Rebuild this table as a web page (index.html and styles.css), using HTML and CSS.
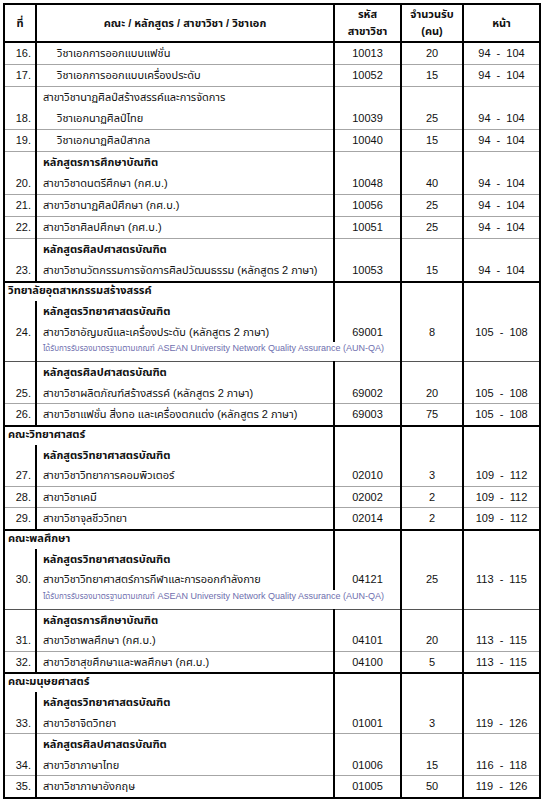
FILE: index.html
```html
<!DOCTYPE html>
<html lang="th">
<head>
<meta charset="utf-8">
<title>ตารางสาขาวิชา</title>
<link rel="stylesheet" href="styles.css">
</head>
<body>
<table class="tbl">
  <colgroup>
    <col class="c1"><col class="c2"><col class="c3"><col class="c4"><col class="c5">
  </colgroup>
  <thead>
    <tr>
      <th><div class="hd">ที่</div></th>
      <th><div class="hd">คณะ / หลักสูตร / สาขาวิชา / วิชาเอก</div></th>
      <th><div class="hd"><span>รหัส</span><span>สาขาวิชา</span></div></th>
      <th><div class="hd"><span>จำนวนรับ</span><span>(คน)</span></div></th>
      <th><div class="hd">หน้า</div></th>
    </tr>
  </thead>
  <tbody class="first">
    <tr><td class="no">16.</td><td class="name"><div class="ln major">วิชาเอกการออกแบบแฟชั่น</div></td><td class="n">10013</td><td class="n">20</td><td class="n pg">94 - 104</td></tr>
    <tr class="g"><td class="no">17.</td><td class="name"><div class="ln major">วิชาเอกการออกแบบเครื่องประดับ</div></td><td class="n">10052</td><td class="n">15</td><td class="n pg">94 - 104</td></tr>
    <tr class="g"><td class="no">18.</td><td class="name"><div class="ln">สาขาวิชานาฏศิลป์สร้างสรรค์และการจัดการ</div><div class="ln major">วิชาเอกนาฏศิลป์ไทย</div></td><td class="n">10039</td><td class="n">25</td><td class="n pg">94 - 104</td></tr>
    <tr class="g"><td class="no">19.</td><td class="name"><div class="ln major">วิชาเอกนาฏศิลป์สากล</div></td><td class="n">10040</td><td class="n">15</td><td class="n pg">94 - 104</td></tr>
    <tr class="g"><td class="no">20.</td><td class="name"><div class="ln prog">หลักสูตรการศึกษาบัณฑิต</div><div class="ln">สาขาวิชาดนตรีศึกษา (กศ.บ.)</div></td><td class="n">10048</td><td class="n">40</td><td class="n pg">94 - 104</td></tr>
    <tr class="g"><td class="no">21.</td><td class="name"><div class="ln">สาขาวิชานาฏศิลป์ศึกษา (กศ.บ.)</div></td><td class="n">10056</td><td class="n">25</td><td class="n pg">94 - 104</td></tr>
    <tr class="g"><td class="no">22.</td><td class="name"><div class="ln">สาขาวิชาศิลปศึกษา (กศ.บ.)</div></td><td class="n">10051</td><td class="n">25</td><td class="n pg">94 - 104</td></tr>
    <tr class="g"><td class="no">23.</td><td class="name"><div class="ln prog">หลักสูตรศิลปศาสตรบัณฑิต</div><div class="ln">สาขาวิชานวัตกรรมการจัดการศิลปวัฒนธรรม (หลักสูตร 2 ภาษา)</div></td><td class="n">10053</td><td class="n">15</td><td class="n pg">94 - 104</td></tr>
  </tbody>
  <tbody>
    <tr class="k"><td class="fac" colspan="2"><div class="fl">วิทยาลัยอุตสาหกรรมสร้างสรรค์</div></td><td></td><td></td><td></td></tr>
    <tr><td class="no">24.</td><td class="name"><div class="ln prog">หลักสูตรวิทยาศาสตรบัณฑิต</div><div class="ln">สาขาวิชาอัญมณีและเครื่องประดับ (หลักสูตร 2 ภาษา)</div></td><td class="n">69001</td><td class="n">8</td><td class="n pg">105 - 108</td></tr>
    <tr><td></td><td class="note" colspan="2"><div class="nl"><span class="note-th">ได้รับการรับรองมาตรฐานตามเกณฑ์</span> ASEAN University Network Quality Assurance (AUN-QA)</div></td><td></td><td></td></tr>
    <tr class="d"><td class="no">25.</td><td class="name"><div class="ln prog">หลักสูตรศิลปศาสตรบัณฑิต</div><div class="ln">สาขาวิชาผลิตภัณฑ์สร้างสรรค์ (หลักสูตร 2 ภาษา)</div></td><td class="n">69002</td><td class="n">20</td><td class="n pg">105 - 108</td></tr>
    <tr class="g"><td class="no">26.</td><td class="name"><div class="ln">สาขาวิชาแฟชั่น สิ่งทอ และเครื่องตกแต่ง (หลักสูตร 2 ภาษา)</div></td><td class="n">69003</td><td class="n">75</td><td class="n pg">105 - 108</td></tr>

    <tr class="k"><td class="fac" colspan="2"><div class="fl">คณะวิทยาศาสตร์</div></td><td></td><td></td><td></td></tr>
    <tr><td class="no">27.</td><td class="name"><div class="ln prog">หลักสูตรวิทยาศาสตรบัณฑิต</div><div class="ln">สาขาวิชาวิทยาการคอมพิวเตอร์</div></td><td class="n">02010</td><td class="n">3</td><td class="n pg">109 - 112</td></tr>
    <tr class="g"><td class="no">28.</td><td class="name"><div class="ln">สาขาวิชาเคมี</div></td><td class="n">02002</td><td class="n">2</td><td class="n pg">109 - 112</td></tr>
    <tr class="g"><td class="no">29.</td><td class="name"><div class="ln">สาขาวิชาจุลชีววิทยา</div></td><td class="n">02014</td><td class="n">2</td><td class="n pg">109 - 112</td></tr>

    <tr class="k"><td class="fac" colspan="2"><div class="fl">คณะพลศึกษา</div></td><td></td><td></td><td></td></tr>
    <tr><td class="no">30.</td><td class="name"><div class="ln prog">หลักสูตรวิทยาศาสตรบัณฑิต</div><div class="ln">สาขาวิชาวิทยาศาสตร์การกีฬาและการออกกำลังกาย</div></td><td class="n">04121</td><td class="n">25</td><td class="n pg">113 - 115</td></tr>
    <tr><td></td><td class="note" colspan="2"><div class="nl"><span class="note-th">ได้รับการรับรองมาตรฐานตามเกณฑ์</span> ASEAN University Network Quality Assurance (AUN-QA)</div></td><td></td><td></td></tr>
    <tr class="d"><td class="no">31.</td><td class="name"><div class="ln prog">หลักสูตรการศึกษาบัณฑิต</div><div class="ln">สาขาวิชาพลศึกษา (กศ.บ.)</div></td><td class="n">04101</td><td class="n">20</td><td class="n pg">113 - 115</td></tr>
    <tr class="g"><td class="no">32.</td><td class="name"><div class="ln">สาขาวิชาสุขศึกษาและพลศึกษา (กศ.บ.)</div></td><td class="n">04100</td><td class="n">5</td><td class="n pg">113 - 115</td></tr>

    <tr class="k"><td class="fac" colspan="2"><div class="fl">คณะมนุษยศาสตร์</div></td><td></td><td></td><td></td></tr>
    <tr><td class="no">33.</td><td class="name"><div class="ln prog">หลักสูตรวิทยาศาสตรบัณฑิต</div><div class="ln">สาขาวิชาจิตวิทยา</div></td><td class="n">01001</td><td class="n">3</td><td class="n pg">119 - 126</td></tr>
    <tr class="g"><td class="no">34.</td><td class="name"><div class="ln prog">หลักสูตรศิลปศาสตรบัณฑิต</div><div class="ln">สาขาวิชาภาษาไทย</div></td><td class="n">01006</td><td class="n">15</td><td class="n pg">116 - 118</td></tr>
    <tr class="g"><td class="no">35.</td><td class="name"><div class="ln">สาขาวิชาภาษาอังกฤษ</div></td><td class="n">01005</td><td class="n">50</td><td class="n pg">119 - 126</td></tr>
  </tbody>
</table>
</body>
</html>
```

FILE: styles.css
```css
html, body {
  margin: 0;
  padding: 0;
  background: #fff;
}

body {
  font-family: "Liberation Sans", "Noto Sans Thai", "Noto Sans", "DejaVu Sans", sans-serif;
  font-size: 11px;
  color: #111;
}

.tbl {
  --lh: 20.5px;
  margin: 3px 0 0 3px;
  width: 536px;
  table-layout: fixed;
  border-collapse: collapse;
  border: 2px solid #000;
}

.c1 { width: 32px; }
.c2 { width: 298px; }
.c3 { width: 67px; }
.c4 { width: 62px; }
.c5 { width: 77px; }

.tbl th,
.tbl td {
  border-left: 2px solid #000;
  border-right: 2px solid #000;
  padding: 0;
  line-height: var(--lh);
  vertical-align: bottom;
  white-space: nowrap;
  overflow: visible;
}

.tbl .first {
  --lh: 21px;
}

.tbl th {
  font-weight: bold;
  text-align: center;
  vertical-align: middle;
  border-bottom: 2px solid #000;
}

.hd {
  height: 36px;
  display: flex;
  flex-direction: column;
  justify-content: center;
  align-items: center;
  line-height: 17px;
}

.hd span {
  display: block;
  height: 17px;
}

.tbl tr.g td { border-top: 1px solid #a6a6a6; }
.tbl tr.d td { border-top: 1px solid #555; }
.tbl tr.k td { border-top: 2px solid #000; }

.ln {
  height: var(--lh);
  line-height: var(--lh);
}

.fl {
  height: 18px;
  line-height: 15px;
}

.nl {
  height: 19px;
  line-height: 13px;
}

.no {
  text-align: right;
  padding-right: 4px !important;
}

.name {
  padding-left: 6px !important;
}

.major {
  padding-left: 14px;
}

.prog {
  font-weight: bold;
}

.fac {
  font-weight: bold;
  padding-left: 3px !important;
}

.n {
  text-align: center;
}

.pg {
  word-spacing: 3px;
}

.note {
  padding-left: 6px !important;
  font-size: 9px;
  color: #6e6eae;
}

.note-th {
  font-size: 8px;
}
```
